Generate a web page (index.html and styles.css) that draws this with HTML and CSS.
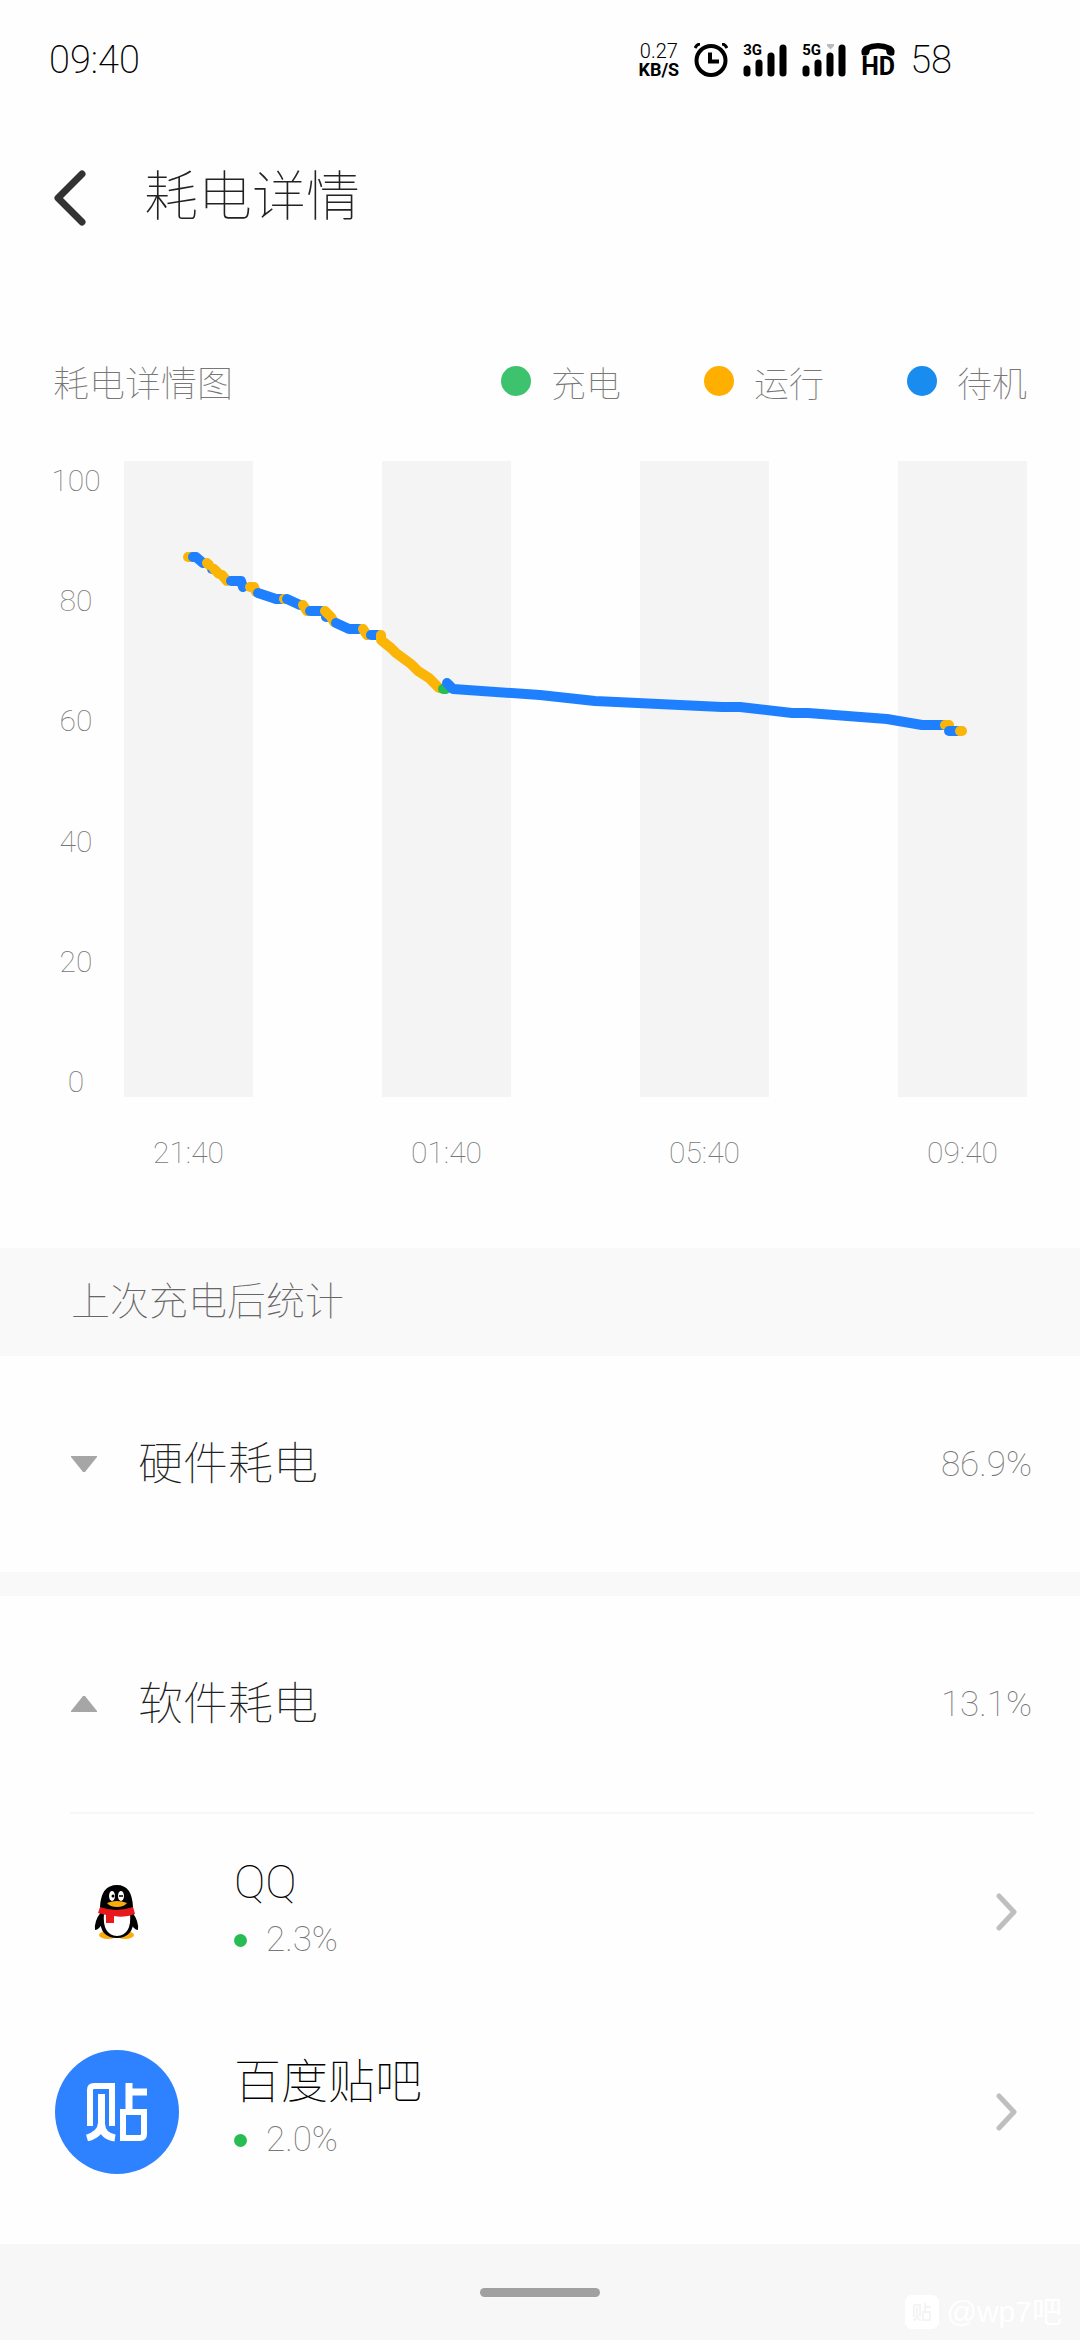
FILE: index.html
```html
<!DOCTYPE html>
<html lang="zh-CN">
<head>
<meta charset="utf-8">
<meta name="viewport" content="width=device-width, initial-scale=1">
<title>耗电详情</title>
<link rel="stylesheet" href="styles.css">
</head>
<body>
<div class="statusbar">
  <span class="clock">09:40</span>
  <div class="status-icons">
    <div class="speed"><span class="speed-value">0.27</span><span class="speed-unit">KB/S</span></div>
    <svg class="alarm" width="34" height="34" viewBox="0 0 34 34" fill="none" stroke="#000"><circle cx="17" cy="17.500" r="14.500" stroke-width="4"/><path d="M16 9.500v9h9" stroke-width="4"/><path d="M1 5Q3 1 6 1M33 5Q31 1 28 1" stroke-width="3"/></svg>
    <div class="signal"><span class="net">3G</span><svg width="44" height="33" viewBox="0 0 44 33" stroke="#000" stroke-width="7" stroke-linecap="round"><path d="M4 25v4M16 19v10M28 12v17M40 4v25"/></svg></div>
    <div class="signal"><span class="net">5G</span><svg width="44" height="33" viewBox="0 0 44 33" stroke="#000" stroke-width="7" stroke-linecap="round"><path d="M4 25v4M16 19v10M28 12v17M40 4v25"/><path d="M25 0h7v2l-3.500 3.500L25 2z" fill="#bbb" stroke="none"/></svg></div>
    <div class="hd"><svg width="34" height="13" viewBox="0 0 34 13"><path d="M1 12Q-1 6 4 3Q17-3 30 3Q35 6 33 12Q29 14 26 11L25 7Q17 4 9 7L8 11Q5 14 1 12z"/></svg><span>HD</span></div>
    <span class="battery">58</span>
  </div>
</div>

<header class="titlebar">
  <button class="back" type="button" aria-label="返回"><svg width="32" height="56" viewBox="0 0 32 56" fill="none" stroke="#333" stroke-width="7" stroke-linecap="round" stroke-linejoin="round"><path d="M28 4L4 28l24 24"/></svg></button>
  <h1>耗电详情</h1>
</header>

<main>
<section class="chart-section">
  <div class="chart-head">
    <h2>耗电详情图</h2>
    <ul class="legend">
      <li><i class="dot charging"></i>充电</li>
      <li><i class="dot running"></i>运行</li>
      <li><i class="dot standby"></i>待机</li>
    </ul>
  </div>
  <div class="chart">
    <div class="y-axis"><span>100</span><span>80</span><span>60</span><span>40</span><span>20</span><span>0</span></div>
    <div class="plot-column">
      <svg class="plot" viewBox="124 461 903 636" role="img" aria-label="耗电详情图">
        <path fill="#f4f4f4" d="M124 461h129v636H124zM382 461h129v636H382zM640 461h129v636H640zM898 461h129v636H898z"/>
        <g fill="none" stroke-width="10" stroke-linecap="round" stroke-linejoin="round">
          <path class="run" d="M188 557h4"/>
          <path class="idle" d="M193 557h3l7 6"/>
          <path class="idle" d="M212 569h1"/>
          <path class="run" d="M207 563l2 2M214 569l5 5M222 575l5 6"/>
          <path class="idle" d="M231 581h10l2 6"/>
          <path class="run" d="M250 587h4l2 5"/>
          <path class="idle" d="M258 593l18 6h5"/>
          <path class="run" d="M284 599h2"/>
          <path class="idle" d="M287 599l13 6"/>
          <path class="run" d="M303 605l4 6"/>
          <path class="idle" d="M310 611h11M326 617h1"/>
          <path class="run" d="M325 611l6 6 3 5"/>
          <path class="idle" d="M336 623l13 6h10"/>
          <path class="run" d="M363 629l4 6"/>
          <path class="idle" d="M371 635h7"/>
          <path class="run" d="M381 635v5l10 8 5 5 15 11 7 7 11 7 10 10"/>
          <path class="charge" d="M443 689h3"/>
          <path class="idle" d="M447 683l6 6 87 6 55 6 127 6h18l52 6h16l79 6 35 6h23"/>
          <path class="run" d="M945 725h4"/>
          <path class="idle" d="M949 731h8"/>
          <path class="run" d="M960 731h2"/>
        </g>
      </svg>
      <div class="x-axis"><span>21:40</span><span>01:40</span><span>05:40</span><span>09:40</span></div>
    </div>
  </div>
</section>

<h2 class="band">上次充电后统计</h2>

<button class="group" type="button" aria-expanded="false">
  <svg width="26" height="16" viewBox="0 0 26 16" fill="#a6a6a6"><path d="M0 0h26v1L14 16h-2L0 1z"/></svg>
  <span class="group-name">硬件耗电</span><span class="group-value">86.9%</span>
</button>
<div class="separator"></div>
<button class="group" type="button" aria-expanded="true">
  <svg width="26" height="16" viewBox="0 0 26 16" fill="#a6a6a6"><path d="M0 16h26v-1L14 0h-2L0 15z"/></svg>
  <span class="group-name">软件耗电</span><span class="group-value">13.1%</span>
</button>

<ul class="apps">
  <li><a class="app" href="#qq">
    <svg class="app-icon" width="124" height="124" viewBox="0 11 124 124">
      <ellipse cx="53" cy="96" rx="9" ry="4" fill="#fbac0c"/><ellipse cx="70" cy="96" rx="9" ry="4" fill="#fbac0c"/>
      <path d="M46 73Q39 82 40 91Q44 91 49 82zM77 73Q84 82 83 91Q79 91 74 82z"/>
      <path d="M45 68Q46 46 62 46Q77 46 78 68L79 80Q78 99 62 99Q45 99 45 80z"/>
      <path d="M49 74H75Q77 96 62 97Q47 96 49 74z" fill="#fff"/>
      <path d="M45 68Q61 74 78 68L80 75Q70 79 59 77V84H51V76L43 74z" fill="#e8191c"/>
      <ellipse cx="57" cy="57" rx="3" ry="5" fill="#fff"/><ellipse cx="66" cy="57" rx="3" ry="5" fill="#fff"/>
      <circle cx="58" cy="57" r="1.500"/><path d="M64 57h4" stroke="#000" stroke-width="1.500"/>
      <path d="M52 64Q62 60 72 64Q69 68 62 68Q55 68 52 64z" fill="#fbac0c"/>
    </svg>
    <span class="app-text"><span class="app-name">QQ</span><span class="app-value"><i></i>2.3%</span></span>
    <svg class="go" width="22" height="38" viewBox="0 0 22 38"><path d="M3 3l15 16L3 35"/></svg>
  </a></li>
  <li><a class="app" href="#tieba">
    <svg class="app-icon" width="124" height="124" viewBox="0 0 124 124">
      <circle cx="62" cy="62" r="62" fill="#2e82ff"/>
      <g fill="none" stroke="#fff" stroke-width="6"><path d="M35 76V40q0-4 4-4H57V76"/><path d="M46.500 44V73Q46 84 32 88M46.500 74Q47 86 60 88" stroke-width="7"/><path d="M74 33V60M74 42H92" stroke-width="7"/><path d="M68 62H89V84q0 4-4 4H68z"/></g>
    </svg>
    <span class="app-text"><span class="app-name">百度贴吧</span><span class="app-value"><i></i>2.0%</span></span>
    <svg class="go" width="22" height="38" viewBox="0 0 22 38"><path d="M3 3l15 16L3 35"/></svg>
  </a></li>
</ul>
</main>

<footer class="navbar">
  <span class="handle"></span>
  <span class="watermark"><svg width="34" height="34" viewBox="0 0 34 34"><rect width="34" height="34" rx="7" fill="#fff"/><g fill="none" stroke="#f4f4f4" stroke-width="2"><path d="M9 22V10h6V22M12 12V21Q11 25 8 25M12 21Q13 25 16 25M20 8V16M20 12H26M18 17H25V25H18z"/></g></svg>@wp7吧</span>
</footer>
</body>
</html>
```
FILE: styles.css
```css
* { box-sizing: border-box; }
body {
  margin: 0;
  min-height: 100vh;
  display: flex;
  flex-direction: column;
  background: #fefefe;
  color: #222;
  font-family: Roboto, "Noto Sans CJK SC", sans-serif;
  font-weight: 100;
}
h1, h2, ul { margin: 0; padding: 0; font-weight: 100; }
ul { list-style: none; }
button { border: 0; background: none; padding: 0; color: inherit; font: inherit; text-align: left; }
svg { display: block; flex: none; }

.statusbar {
  display: flex;
  align-items: center;
  justify-content: space-between;
  height: 120px;
  padding: 0 128px 0 49px;
  color: #000;
}
.clock, .battery { font-size: 38px; font-weight: 200; }
.status-icons { display: flex; align-items: center; gap: 15px; }
.speed { display: flex; flex-direction: column; align-items: center; }
.speed-value { font-size: 20px; line-height: 20px; font-weight: 300; }
.speed-unit { font-size: 18px; line-height: 18px; font-weight: 700; }
.signal { position: relative; }
.net { position: absolute; left: 0; top: 0; font-size: 15px; line-height: 12px; font-weight: 700; }
.hd { display: flex; flex-direction: column; align-items: center; }
.hd span { font-size: 25px; line-height: 22px; font-weight: 700; }

.titlebar {
  display: flex;
  align-items: center;
  gap: 58px;
  height: 156px;
  padding: 0 54px;
}
h1 { font-size: 54px; line-height: 80px; color: #222; }

.chart-section { padding: 75px 53px; color: #777; }
.chart-head { display: flex; align-items: center; justify-content: space-between; height: 60px; }
.chart-head h2 { font-size: 36px; }
.legend { display: flex; gap: 83px; font-size: 35px; }
.legend li { display: flex; align-items: center; gap: 20px; }
.dot { width: 30px; height: 30px; border-radius: 50%; }
.charging { background: #3dc26d; }
.running { background: #ffaf00; }
.standby { background: #188cef; }

.chart { display: flex; margin-top: 50px; font-size: 30px; line-height: 40px; }
.y-axis {
  display: flex;
  flex-direction: column;
  justify-content: space-between;
  flex: none;
  align-items: center;
  width: 46px;
  margin: 0 25px 71px 0;
}
.plot-column { flex: 1; }
.plot { width: 100%; height: auto; }
.run { stroke: #fab507; }
.idle { stroke: #1f80ff; }
.charge { stroke: #28bd53; }
.x-axis { display: grid; grid-template-columns: 1fr 1fr 1fr 1fr 1fr 1fr 1fr; margin-top: 36px; }
.x-axis span { grid-row: 1; justify-self: center; }
.x-axis span:nth-child(2) { grid-column: 3; }
.x-axis span:nth-child(3) { grid-column: 5; }
.x-axis span:nth-child(4) { grid-column: 7; }

.band { padding: 0 71px; background: #f9f9f9; color: #666; font-size: 39px; line-height: 108px; }
.group { display: flex; align-items: center; width: 100%; height: 216px; padding: 0 48px 0 71px; }
.group-name { flex: 1; margin-left: 41px; padding-bottom: 8px; font-size: 45px; }
.group-value { color: #777; font-size: 35px; }
.separator { height: 24px; background: #f9f9f9; }

.apps { position: relative; }
.apps::before { content: ""; position: absolute; top: 0; left: 70px; right: 46px; height: 2px; background: #f7f7f7; }
.app { display: flex; align-items: center; height: 200px; padding: 0 62px 0 55px; color: #000; text-decoration: none; }
.app-text { display: flex; flex-direction: column; flex: 1; margin-left: 55px; padding-bottom: 8px; }
.app-name { font-size: 47px; line-height: 64px; }
.app-value { display: flex; align-items: center; gap: 19px; color: #777; font-size: 35px; line-height: 52px; }
.app-value i { width: 13px; height: 13px; border-radius: 50%; background: #28bd53; }
.go { fill: none; stroke: #bfbfbf; stroke-width: 5; stroke-linecap: round; stroke-linejoin: round; }

.navbar { display: grid; place-items: center; position: relative; height: 96px; margin-top: auto; background: #f7f7f7; }
.handle { width: 120px; height: 9px; border-radius: 5px; background: #a0a0a0; }
.watermark {
  position: absolute;
  right: 18px;
  bottom: 8px;
  display: flex;
  align-items: center;
  gap: 8px;
  color: #fff;
  font: 400 30px/40px "Liberation Sans", "Noto Sans CJK SC", sans-serif;
}
```
